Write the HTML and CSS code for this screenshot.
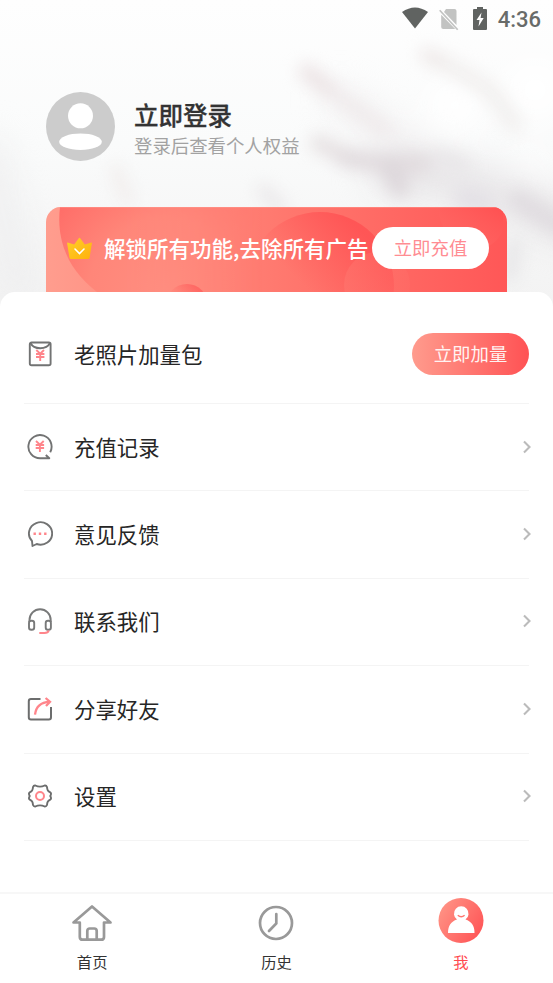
FILE: index.html
```html
<!DOCTYPE html>
<html lang="zh-CN">
<head>
<meta charset="utf-8">
<title>我</title>
<link rel="stylesheet" href="styles.css">
</head>
<body>
<div class="app">
  <header class="hero">
    <svg class="backdrop" viewBox="0 0 553 320" aria-hidden="true">
      <defs>
        <linearGradient id="sky" x1="0" y1="0" x2="0" y2="1"><stop offset="0" stop-color="#fefefe"/><stop offset=".45" stop-color="#fafbfb"/><stop offset="1" stop-color="#f2f2f2"/></linearGradient>
        <filter id="soft" filterUnits="userSpaceOnUse" x="-60" y="-60" width="680" height="440" color-interpolation-filters="sRGB"><feGaussianBlur stdDeviation="8"/></filter>
        <filter id="wide" filterUnits="userSpaceOnUse" x="-60" y="-60" width="680" height="440" color-interpolation-filters="sRGB"><feGaussianBlur stdDeviation="17"/></filter>
      </defs>
      <rect width="553" height="320" fill="url(#sky)"/>
      <g filter="url(#wide)" fill="none" stroke-linecap="round">
        <path d="M340 100L380 130L440 165" stroke="#f2f0f1" stroke-width="24"/>
        <path d="M-10 150L20 290" stroke="#ededee" stroke-width="26"/>
        <path d="M390 170L490 190L570 225" stroke="#e8e6e8" stroke-width="42"/>
        <circle cx="455" cy="105" r="28" fill="#fff"/>
        <circle cx="535" cy="90" r="30" fill="#fff"/>
        <circle cx="530" cy="165" r="14" fill="#fff"/>
      </g>
      <g filter="url(#soft)" fill="none" stroke-linecap="round">
        <path d="M307 72L335 94" stroke="#ece4e5" stroke-width="17"/>
        <path d="M335 94L385 130" stroke="#efeaeb" stroke-width="15"/>
        <path d="M427 55L450 66" stroke="#eee9e8" stroke-width="15"/>
        <path d="M450 66L490 90L515 125" stroke="#f1efee" stroke-width="16"/>
        <path d="M318 143L345 156" stroke="#e6e1e2" stroke-width="17"/>
        <path d="M345 158L385 164L425 164" stroke="#e1dbde" stroke-width="19"/>
        <path d="M390 168L400 188" stroke="#ddd7db" stroke-width="20"/>
        <path d="M440 160L460 166" stroke="#e9e7e9" stroke-width="22"/>
        <path d="M465 198L485 204" stroke="#e3e0e5" stroke-width="22"/>
        <path d="M518 200L560 226" stroke="#e0dce0" stroke-width="20"/>
        <path d="M116 170L128 200" stroke="#f1edec" stroke-width="12"/>
        <path d="M263 190L280 207" stroke="#e9e6e8" stroke-width="12"/>
        <path d="M515 245L510 275" stroke="#e6e5e7" stroke-width="14"/>
      </g>
    </svg>

    <div class="status">
      <svg class="wifi" viewBox="0 0 26 22"><path d="M0 5Q13-4 26 5L13 21.500Z" fill="#606361"/></svg>
      <svg class="sim" viewBox="0 0 20 23"><path d="M7 1H15.500Q17.500 1 17.500 3V17L5 4ZM2.200 6.800L16.200 21H4.200Q2.200 21 2.200 19Z" fill="#c2c3c2"/><path d="M.7 2.200L18.700 21.800" stroke="#c2c3c2" stroke-width="1.700"/></svg>
      <svg class="battery" viewBox="0 0 14 23"><path d="M4 0H10V2H13Q14 2 14 3V22Q14 23 13 23H1Q0 23 0 22V3Q0 2 1 2H4Z" fill="#606361"/><path d="M8.500 5.500L3.500 13H6.500L5.500 19.500L10.700 11H7.600Z" fill="#fff"/></svg>
      <span class="time">4:36</span>
    </div>

    <div class="profile">
      <svg class="avatar" viewBox="0 0 69 69"><circle cx="34.500" cy="34.500" r="34.500" fill="#ccc"/><circle cx="34.500" cy="23.800" r="12.500" fill="#fff"/><ellipse cx="34.500" cy="49.700" rx="21.300" ry="8.200" fill="#fff"/></svg>
      <div class="profile-text">
        <div class="login">立即登录</div>
        <div class="hint">登录后查看个人权益</div>
      </div>
    </div>

    <section class="banner">
      <svg class="banner-art" viewBox="0 0 461 90" aria-hidden="true">
        <defs>
          <linearGradient id="base"><stop offset="0" stop-color="#ff9d8e"/><stop offset=".5" stop-color="#ff796f"/><stop offset="1" stop-color="#ff5757"/></linearGradient>
          <radialGradient id="big" gradientUnits="userSpaceOnUse" cx="120" cy="88" r="155"><stop offset="0" stop-color="#ff8e80"/><stop offset=".5" stop-color="#ff8679"/><stop offset="1" stop-color="#ff6663"/></radialGradient>
          <linearGradient id="fade"><stop offset="0" stop-color="#fff"/><stop offset=".3" stop-color="#fff"/><stop offset=".8" stop-color="#000"/></linearGradient>
          <mask id="leftside"><rect width="270" height="90" fill="url(#fade)"/></mask>
          <linearGradient id="disc" x1=".2" y1=".8" x2=".8" y2=".15"><stop offset=".4" stop-color="#ff5555" stop-opacity="0"/><stop offset="1" stop-color="#ff5052" stop-opacity=".8"/></linearGradient>
          <linearGradient id="corner" x1="0" y1="1" x2="1" y2="0"><stop offset="0" stop-color="#ff706b" stop-opacity=".3"/><stop offset="1" stop-color="#ff5051"/></linearGradient>
          <linearGradient id="glow"><stop offset="0" stop-color="#ff7c73" stop-opacity=".4"/><stop offset="1" stop-color="#ff7770" stop-opacity=".2"/></linearGradient>
        </defs>
        <rect width="461" height="90" fill="url(#base)"/>
        <path d="M14 0C10 34 22 66 58 90H270V0Z" fill="url(#big)" mask="url(#leftside)"/>
        <circle cx="274" cy="79" r="74" fill="url(#disc)"/>
        <circle cx="141" cy="98" r="21" fill="url(#disc)" opacity=".7"/>
        <circle cx="331" cy="78" r="33" fill="url(#glow)"/>
        <path d="M392 0H457V22Q451 40 430 43Q394 34 392 0Z" fill="url(#corner)"/>
        <path d="M10 .5H451" stroke="#ff9990" stroke-opacity=".5"/>
      </svg>
      <svg class="crown" viewBox="0 0 25 23"><defs><linearGradient id="gold" x1="0" y1="0" x2="1" y2="1"><stop stop-color="#ffcf2a"/><stop offset="1" stop-color="#ffb10d"/></linearGradient></defs><path d="M.6 5.500L7.200 7.500L12 1Q12.500.3 13 1L17.800 7.500L24.400 5.500Q25 5.500 24.900 6.300L22.600 20.500Q22.400 22 20.900 22H4.100Q2.600 22 2.400 20.500L.1 6.300Q0 5.500 .6 5.500Z" fill="url(#gold)"/><path d="M8 12L12.500 16.500L17 12" fill="none" stroke="#fff" stroke-width="1.600" stroke-linecap="round"/></svg>
      <span class="banner-text">解锁所有功能,去除所有广告</span>
      <span class="pill pill-light">立即充值</span>
    </section>
  </header>

  <main class="sheet">
    <div class="row row-first">
      <svg class="icon" viewBox="0 0 26 26"><g fill="none" stroke="#727373" stroke-width="1.900"><rect x="2.800" y="1.500" width="20.800" height="22.800" rx="1.800"/><path d="M3.500 2Q6 7.200 13.200 7.200Q20.400 7.200 23 2"/></g><path d="M9.300 9L13.200 12.700L17 9M9 13H17.400M9 16H17.400M13.200 12.700V20" fill="none" stroke="#ff858b" stroke-width="1.900"/></svg>
      <span class="label">老照片加量包</span>
      <span class="pill pill-red">立即加量</span>
    </div>
    <div class="row">
      <svg class="icon" viewBox="0 0 26 26"><path d="M23.200 18.200A11.600 11.600 0 1 0 13 24.300H22.300L18.800 21" fill="none" stroke="#727373" stroke-width="1.900" stroke-linejoin="round"/><path d="M9 7L12.900 10.700L16.700 7M8.700 11H17.100M8.700 14H17.100M12.900 10.700V18" fill="none" stroke="#ff858b" stroke-width="1.900"/></svg>
      <span class="label">充值记录</span>
      <svg class="chevron" viewBox="0 0 8 14"><path d="M1 1.500L6.500 7L1 12.500"/></svg>
    </div>
    <div class="row">
      <svg class="icon" viewBox="0 0 26 26"><path d="M5 20A11.600 11.200 0 1 1 9.700 23L5.500 25Z" fill="none" stroke="#727373" stroke-width="1.900" stroke-linejoin="round"/><path d="M6.500 12.800H8.900M11.800 12.800H14.200M17.100 12.800H19.500" stroke="#ff858b" stroke-width="2.400"/></svg>
      <span class="label">意见反馈</span>
      <svg class="chevron" viewBox="0 0 8 14"><path d="M1 1.500L6.500 7L1 12.500"/></svg>
    </div>
    <div class="row">
      <svg class="icon" viewBox="0 0 26 26"><g fill="none" stroke="#787979" stroke-width="1.900"><path d="M2.500 14V12A10.600 10.800 0 0 1 23.700 12V14"/><rect x="2" y="12.700" width="5.200" height="9" rx="2.300"/><rect x="18.700" y="12.700" width="5.200" height="9" rx="2.300"/></g><path d="M21.800 22.500Q21 25 17.500 25H12.300" fill="none" stroke="#ff858b" stroke-width="2"/></svg>
      <span class="label">联系我们</span>
      <svg class="chevron" viewBox="0 0 8 14"><path d="M1 1.500L6.500 7L1 12.500"/></svg>
    </div>
    <div class="row">
      <svg class="icon" viewBox="0 0 26 26"><path d="M13.500 3H4Q1.800 3 1.800 5.200V21.200Q1.800 23.500 4 23.500H21.800Q24 23.500 24 21.200V11" fill="none" stroke="#6c6d6d" stroke-width="2"/><path d="M8 18.700C9 10.500 13 6.200 22.500 5.900M18.600 2L23 5.800L19 10" fill="none" stroke="#ff858b" stroke-width="2.300"/></svg>
      <span class="label">分享好友</span>
      <svg class="chevron" viewBox="0 0 8 14"><path d="M1 1.500L6.500 7L1 12.500"/></svg>
    </div>
    <div class="row">
      <svg class="icon" viewBox="0 0 26 26"><path d="M8.300 2.500Q13 4.800 17.700 2.500Q19.300 2.200 20 4C20.300 7.400 20.800 8.300 23.600 9.700Q24.600 10.600 23.300 13Q24.600 15.400 23.600 16.300C20.800 17.700 20.300 18.600 20 22Q19.300 23.700 17.700 23.500Q13 21.200 8.300 23.500Q6.700 23.700 6 22C5.700 18.600 5.200 17.700 2.400 16.300Q1.400 15.400 2.700 13Q1.400 10.600 2.400 9.700C5.200 8.300 5.700 7.400 6 4Q6.700 2.200 8.300 2.500Z" fill="none" stroke="#6c6d6d" stroke-width="1.900"/><circle cx="13" cy="13" r="4" fill="none" stroke="#ff858b" stroke-width="2"/></svg>
      <span class="label">设置</span>
      <svg class="chevron" viewBox="0 0 8 14"><path d="M1 1.500L6.500 7L1 12.500"/></svg>
    </div>
  </main>

  <nav class="tabs">
    <a class="tab">
      <svg class="tab-icon" viewBox="0 0 46 46"><g fill="none" stroke="#999" stroke-width="2.700" stroke-linecap="round" stroke-linejoin="round"><path d="M10.800 23.500H4.500L23 7.400L41.500 23.500H35V37.900Q35 40.700 32.200 40.700H13.600Q10.800 40.700 10.800 37.900Z"/><path d="M18.300 40V32Q18.300 29.500 20.800 29.500H25.200Q27.700 29.500 27.700 32V40"/></g></svg>
      <span>首页</span>
    </a>
    <a class="tab">
      <svg class="tab-icon" viewBox="0 0 46 46"><g fill="none" stroke="#999" stroke-width="2.700" stroke-linecap="round"><circle cx="23" cy="24" r="16"/><path d="M23.300 15V24.500L16 32"/></g></svg>
      <span>历史</span>
    </a>
    <a class="tab tab-active">
      <svg class="tab-icon" viewBox="0 0 46 46"><defs><linearGradient id="me" x1="0" y1=".2" x2="1" y2=".8"><stop stop-color="#ff9486"/><stop offset="1" stop-color="#ff5355"/></linearGradient></defs><circle cx="23" cy="22.500" r="22.500" fill="url(#me)"/><path d="M10 35C10 27.500 13 23.600 19 21.600A7.300 7.300 0 1 1 27.500 21.600C33.500 23.600 36.500 27.500 36.500 35Z" fill="#fff"/><path d="M19.800 17.300Q23.200 20.300 26.600 17.300" fill="none" stroke="#ff756f" stroke-width="1.500"/></svg>
      <span>我</span>
    </a>
  </nav>
</div>
</body>
</html>
```
FILE: styles.css
```css
* { box-sizing: border-box; }

body {
  margin: 0;
  background: #fff;
  color: #262626;
  font-family: "Noto Sans CJK SC", sans-serif;
}

svg { display: block; flex: none; }

.app {
  width: 553px;
  height: 983px;
  display: flex;
  flex-direction: column;
  overflow: hidden;
}

.hero {
  position: relative;
  height: 292px;
  flex: none;
}

.backdrop {
  position: absolute;
  top: 0;
  left: 0;
  width: 553px;
  height: 320px;
}

.status {
  position: relative;
  height: 38px;
  padding-right: 12px;
  display: flex;
  justify-content: flex-end;
  align-items: center;
}
.wifi { width: 26px; height: 22px; margin: 0 11px 2px 0; }
.sim { width: 20px; height: 23px; margin-right: 14px; }
.battery { width: 14px; height: 23px; margin: 0 11px 1px 0; }
.time {
  font: 500 22px/38px Roboto, sans-serif;
  padding-top: 1px;
  color: #686b69;
}

.profile {
  position: relative;
  display: flex;
  padding: 54px 0 0 46px;
}
.avatar { width: 69px; height: 69px; }
.profile-text { padding: 5px 0 0 19px; height: 69px; }
.login {
  font-size: 24.5px;
  line-height: 35px;
  font-weight: 500;
  color: #333;
  -webkit-text-stroke: .3px #333;
}
.hint {
  font-size: 18.4px;
  line-height: 26px;
  font-weight: 400;
  color: #a2a2a2;
}

.banner {
  position: relative;
  width: 461px;
  height: 90px;
  margin: 46px 0 0 46px;
  padding: 0 18px 8px 21px;
  display: flex;
  align-items: center;
  border-radius: 15px 15px 0 0;
  overflow: hidden;
}
.banner-art { position: absolute; inset: 0; width: 461px; height: 90px; }
.crown { position: relative; width: 25px; height: 23px; margin-right: 12px; }
.banner-text {
  position: relative;
  flex: 1;
  white-space: nowrap;
  font-size: 21.5px;
  line-height: 32px;
  font-weight: 500;
  color: #fff;
}

.pill {
  position: relative;
  width: 117px;
  height: 42px;
  flex: none;
  border-radius: 21px;
  font-size: 18.4px;
  line-height: 41px;
  font-weight: 400;
  text-align: center;
}
.pill-light { background: #fff; color: #ff8c92; }
.pill-red { background: linear-gradient(90deg, #ff9b8d, #ff5254); color: #fff3f2; }

.sheet {
  position: relative;
  flex: 1;
  padding: 0 24px;
  background: #fff;
  border-radius: 15px 15px 0 0;
}
.row {
  height: 87.4px;
  padding: 0 0 1px 3px;
  display: flex;
  align-items: center;
  border-bottom: 1px solid #f4f4f4;
}
.row-first { height: 112px; padding-top: 13px; }
.icon { width: 26px; height: 26px; margin-right: 21px; }
.label {
  flex: 1;
  font-size: 21.4px;
  line-height: 32px;
  font-weight: 400;
}
.chevron {
  width: 8px;
  height: 14px;
  margin-right: -2px;
  fill: none;
  stroke: #bbb;
  stroke-width: 2.1;
}

.tabs {
  position: relative;
  height: 91px;
  flex: none;
  display: flex;
  border-top: 2px solid #f7f7f7;
  background: #fff;
}
.tab {
  flex: 1;
  display: flex;
  flex-direction: column;
  align-items: center;
  padding-top: 5px;
  font-size: 15.3px;
  line-height: 22px;
  color: #333;
}
.tab-icon { width: 46px; height: 46px; margin-bottom: 5px; }
.tab-active { color: #ff4a50; }
.tab-active .tab-icon { margin: -1px 0 6px; }
```
